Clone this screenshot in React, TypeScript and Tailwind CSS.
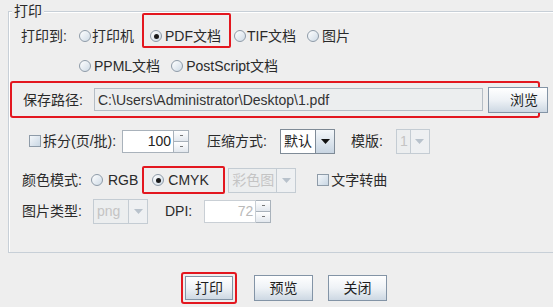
import React from "react";

const FONT = '"Liberation Sans", Arial, "Noto Sans CJK SC", sans-serif';

function Radio({ checked }: { checked?: boolean }) {
  return (
    <span className="inline-flex items-center justify-center w-[12px] h-[12px] rounded-full border border-[#8e9ba8] bg-gradient-to-br from-[#ffffff] to-[#cfdbe6] shrink-0">
      {checked && <span className="w-[5px] h-[5px] rounded-full bg-[#1b1b1b]" />}
    </span>
  );
}

function Check() {
  return (
    <span className="inline-block w-[12px] h-[12px] border border-[#8e9ba8] bg-gradient-to-br from-[#f4f7fa] to-[#c9d7e4] shrink-0" />
  );
}

function Arrow({ disabled }: { disabled?: boolean }) {
  return (
    <svg width="9" height="5" viewBox="0 0 9 5">
      <path d="M0 0 L9 0 L4.5 5 Z" fill={disabled ? "#b8c2cc" : "#111"} />
    </svg>
  );
}

function Spinner({ value, disabled }: { value: string; disabled?: boolean }) {
  return (
    <div className="flex h-[23px]">
      <div
        className={`w-[52px] h-full border border-[#a9b2bb] bg-white flex items-center justify-end pr-[2px] ${
          disabled ? "text-[#b9b9b9] border-[#c9cfd5]" : "text-[#222]"
        }`}
      >
        {value}
      </div>
      <div className="flex flex-col w-[15px] h-full border border-l-0 border-[#a9b2bb]">
        <div className="flex-1 flex items-center justify-center bg-gradient-to-b from-white to-[#e3e8ee] border-b border-[#a9b2bb]">
          <span className="w-[3px] h-[1px] bg-[#777]" />
        </div>
        <div className="flex-1 flex items-center justify-center bg-gradient-to-b from-white to-[#e3e8ee]">
          <span className="w-[3px] h-[1px] bg-[#777]" />
        </div>
      </div>
    </div>
  );
}

function Combo({ value, width, disabled }: { value: string; width: number; disabled?: boolean }) {
  return (
    <div
      className={`flex h-[25px] border ${disabled ? "border-[#c4ccd3]" : "border-[#7f8b97]"}`}
      style={{ width }}
    >
      <div
        className={`flex-1 flex items-center pl-[3px] ${
          disabled ? "text-[#c4c4c4] bg-[#eceeef]" : "bg-white text-[#222]"
        }`}
      >
        {value}
      </div>
      <div
        className={`w-[19px] flex items-center justify-center border-l ${
          disabled
            ? "border-[#c4ccd3] bg-[#eef0f2]"
            : "border-[#7f8b97] bg-gradient-to-b from-[#f4f7fa] to-[#c8d5e2]"
        }`}
      >
        <Arrow disabled={disabled} />
      </div>
    </div>
  );
}

function Btn({ label, className = "" }: { label: string; className?: string }) {
  return (
    <div
      className={`flex items-center justify-center border border-[#8394a6] bg-gradient-to-b from-[#ffffff] via-[#eef2f6] to-[#cdd8e3] text-[#1e1e1e] ${className}`}
    >
      {label}
    </div>
  );
}

export default function App() {
  return (
    <div
      className="w-[553px] h-[307px] overflow-hidden bg-[#eeeeee] text-[14px] text-[#2a2a2a] leading-none"
      style={{ fontFamily: FONT }}
    >
      {/* Group box */}
      <div className="relative mt-[11px] ml-[8px] w-[560px] h-[242px] border border-[#c7cfd7] shadow-[inset_1px_1px_0_#ffffff]">
        <span className="absolute top-[-9px] left-[3px] px-[2px] bg-[#eeeeee] leading-[16px]">打印</span>

        {/* Row 1 */}
        <div className="flex items-center h-[24px] mt-[12px] pl-[12px]">
          <span className="w-[58px]">打印到:</span>
          <Radio />
          <span className="ml-[1px]">打印机</span>
          <div className="self-end ml-[8px] h-[35px] w-[89px] flex items-end pb-[3px] pl-[6px] border-[2px] border-[#e3171f] rounded-[2px]">
            <div className="flex items-center">
              <Radio checked />
              <span className="ml-[3px]">PDF文档</span>
            </div>
          </div>
          <span className="ml-[3px]" />
          <Radio />
          <span className="ml-[1px]">TIF文档</span>
          <span className="ml-[11px]" />
          <Radio />
          <span className="ml-[3px]">图片</span>
        </div>

        {/* Row 2 */}
        <div className="flex items-center h-[24px] mt-[6px] pl-[70px]">
          <Radio />
          <span className="ml-[3px]">PPML文档</span>
          <span className="ml-[11px]" />
          <Radio />
          <span className="ml-[3px]">PostScript文档</span>
        </div>

        {/* Path row */}
        <div className="flex items-center mt-[3px] ml-[1px]">
          <div className="flex items-center w-[530px] h-[37px] border-[2px] border-[#e3171f] rounded-[3px] pl-[11px]">
            <span className="w-[71px]">保存路径:</span>
            <div className="w-[389px] h-[23px] border border-[#b5bdc5] bg-[#eceeef] flex items-center pl-[3px] text-[#333]">
              C:\Users\Administrator\Desktop\1.pdf
            </div>
          </div>
          <Btn label="浏览" className="-ml-[52px] w-[60px] h-[26px] justify-end pr-[9px]" />
        </div>

        {/* Row 4 */}
        <div className="flex items-center h-[24px] mt-[11px] pl-[20px]">
          <Check />
          <span className="ml-[2px]">拆分(页/批):</span>
          <span className="ml-[6px]" />
          <Spinner value="100" />
          <span className="ml-[18px]">压缩方式:</span>
          <span className="ml-[13px]" />
          <Combo value="默认" width={55} />
          <span className="ml-[16px]">模版:</span>
          <span className="ml-[13px]" />
          <Combo value="1" width={34} disabled />
        </div>

        {/* Row 5 */}
        <div className="flex items-center h-[28px] mt-[13px] pl-[13px]">
          <span className="w-[69px]">颜色模式:</span>
          <Radio />
          <span className="ml-[5px]">RGB</span>
          <div className="ml-[4px] h-[28px] w-[83px] flex items-center pl-[8px] border-[2px] border-[#e3171f] rounded-[2px]">
            <Radio checked />
            <span className="ml-[4px]">CMYK</span>
          </div>
          <span className="ml-[3px]" />
          <Combo value="彩色图" width={68} disabled />
          <span className="ml-[21px]" />
          <Check />
          <span className="ml-[2px]">文字转曲</span>
        </div>

        {/* Row 6 */}
        <div className="flex items-center h-[24px] mt-[5px] pl-[13px]">
          <span className="w-[71px]">图片类型:</span>
          <Combo value="png" width={55} disabled />
          <span className="ml-[17px]">DPI:</span>
          <span className="ml-[12px]" />
          <Spinner value="72" disabled />
        </div>
      </div>

      {/* Bottom buttons */}
      <div className="flex items-center mt-[21px] pl-[181px] gap-[18px]">
        <div className="p-[2px] border-[2px] border-[#e3171f] rounded-[3px] -my-[2px]">
          <Btn label="打印" className="w-[48px] h-[24px]" />
        </div>
        <Btn label="预览" className="w-[59px] h-[26px] -ml-[1px]" />
        <Btn label="关闭" className="w-[59px] h-[26px] -ml-[3px]" />
      </div>
    </div>
  );
}
